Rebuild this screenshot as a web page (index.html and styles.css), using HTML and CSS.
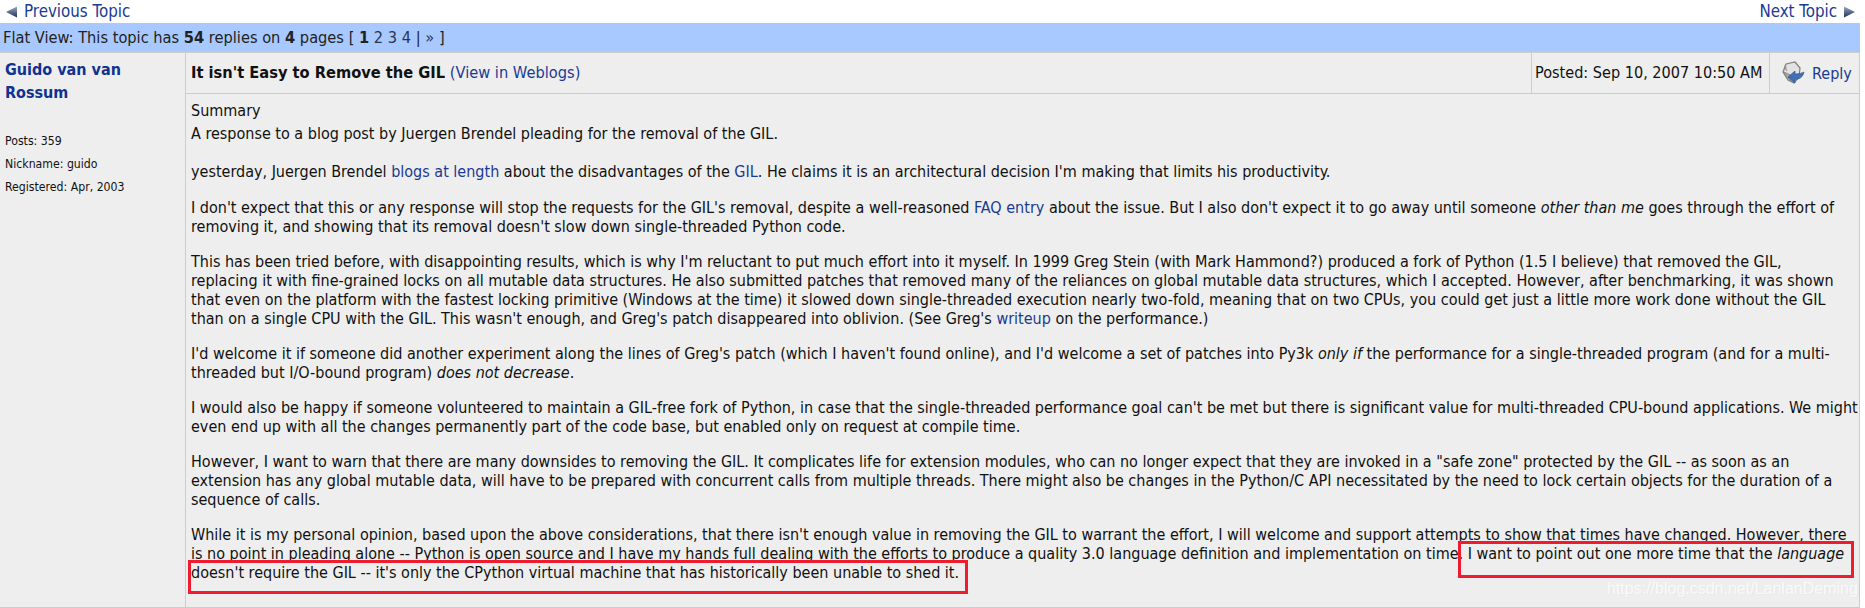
FILE: index.html
```
<!DOCTYPE html>
<html lang="en">
<head>
<meta charset="utf-8">
<title>It isn't Easy to Remove the GIL</title>
<link rel="stylesheet" href="styles.css">
</head>
<body>
<nav class="topnav">
  <a class="navlink" href="#"><svg class="arrow" width="12" height="12" viewBox="0 0 12 12"><defs><linearGradient id="ga" x1="0" y1="0" x2="0" y2="1"><stop offset="0" stop-color="#9aa9c4"/><stop offset="1" stop-color="#1f2f55"/></linearGradient></defs><path d="M12 0.5V11.5L1 6Z" fill="url(#ga)"/></svg>Previous Topic</a>
  <a class="navlink" href="#">Next Topic<svg class="arrow" width="12" height="12" viewBox="0 0 12 12"><defs><linearGradient id="gb" x1="0" y1="0" x2="0" y2="1"><stop offset="0" stop-color="#9aa9c4"/><stop offset="1" stop-color="#1f2f55"/></linearGradient></defs><path d="M0 0.5V11.5L11 6Z" fill="url(#gb)"/></svg></a>
</nav>
<div class="flatbar">Flat View: This topic has <b>54</b> replies on <b>4</b> pages [ <b>1</b> <a href="#">2</a> <a href="#">3</a> <a href="#">4</a> | <a href="#">»</a> ]</div>
<div class="post">
  <aside class="author">
    <a class="name" href="#">Guido van van<br>Rossum</a>
    <ul class="meta">
      <li>Posts: 359</li>
      <li>Nickname: guido</li>
      <li>Registered: Apr, 2003</li>
    </ul>
  </aside>
  <div class="main">
    <header class="head">
      <div class="title"><b>It isn't Easy to Remove the GIL</b> <a href="#">(View in Weblogs)</a></div>
      <div class="posted">Posted: Sep 10, 2007 10:50 AM</div>
      <div class="reply"><svg width="24" height="24" viewBox="0 0 24 24"><path d="M4 3l9-2 5 6-1 9-5 6-6-3-5-8z" fill="#e2e2e2" stroke="#7d7d7d" stroke-width="1.200"/><path d="M4 3c-2 2-1 5 1 7M2 11c1 3 3 6 6 8l4 3 1-6z" fill="#a9a9a9" stroke="#808080" stroke-width=".8"/><path d="M6 16l7-6v3c4 0 7-1 9-2-1 5-5 8-9 7v4z" fill="#3f6fb5" stroke="#2b4c86" stroke-width=".6"/></svg><a href="#">Reply</a></div>
    </header>
    <div class="body">
      <div class="label">Summary</div>
      <p class="lede">A response to a blog post by Juergen Brendel pleading for the removal of the GIL.</p>
      <p class="intro">yesterday, Juergen Brendel <a href="#">blogs at length</a> about the disadvantages of the <a href="#">GIL</a>. He claims it is an architectural decision I'm making that limits his productivity.</p>
      <p>I don't expect that this or any response will stop the requests for the GIL's removal, despite a well-reasoned <a href="#">FAQ entry</a> about the issue. But I also don't expect it to go away until someone <i>other than me</i> goes through the effort of<br>removing it, and showing that its removal doesn't slow down single-threaded Python code.</p>
      <p>This has been tried before, with disappointing results, which is why I'm reluctant to put much effort into it myself. In 1999 Greg Stein (with Mark Hammond?) produced a fork of Python (1.5 I believe) that removed the GIL,<br>replacing it with fine-grained locks on all mutable data structures. He also submitted patches that removed many of the reliances on global mutable data structures, which I accepted. However, after benchmarking, it was shown<br>that even on the platform with the fastest locking primitive (Windows at the time) it slowed down single-threaded execution nearly two-fold, meaning that on two CPUs, you could get just a little more work done without the GIL<br>than on a single CPU with the GIL. This wasn't enough, and Greg's patch disappeared into oblivion. (See Greg's <a href="#">writeup</a> on the performance.)</p>
      <p>I'd welcome it if someone did another experiment along the lines of Greg's patch (which I haven't found online), and I'd welcome a set of patches into Py3k <i>only if</i> the performance for a single-threaded program (and for a multi-<br>threaded but I/O-bound program) <i>does not decrease</i>.</p>
      <p>I would also be happy if someone volunteered to maintain a GIL-free fork of Python, in case that the single-threaded performance goal can't be met but there is significant value for multi-threaded CPU-bound applications. We might<br>even end up with all the changes permanently part of the code base, but enabled only on request at compile time.</p>
      <p>However, I want to warn that there are many downsides to removing the GIL. It complicates life for extension modules, who can no longer expect that they are invoked in a "safe zone" protected by the GIL -- as soon as an<br>extension has any global mutable data, will have to be prepared with concurrent calls from multiple threads. There might also be changes in the Python/C API necessitated by the need to lock certain objects for the duration of a<br>sequence of calls.</p>
      <p>While it is my personal opinion, based upon the above considerations, that there isn't enough value in removing the GIL to warrant the effort, I will welcome and support attempts to show that times have changed. However, there<br>is no point in pleading alone -- Python is open source and I have my hands full dealing with the efforts to produce a quality 3.0 language definition and implementation on time. I want to point out one more time that the <i>language</i><br>doesn't require the GIL -- it's only the CPython virtual machine that has historically been unable to shed it.</p>
    </div>
  </div>
</div>
<div class="mark mark-a"></div>
<div class="mark mark-b"></div>
<div class="watermark">https://blog.csdn.net/LanlanDeming</div>
</body>
</html>
```
FILE: styles.css
```
html, body { margin: 0; padding: 0; height: 608px; overflow: hidden; background: #fff; }
body { font: 16.2px/23px "DejaVu Sans Condensed", "DejaVu Sans", sans-serif; color: #111; position: relative; }
a { color: #1a3a94; text-decoration: none; }
.topnav { display: flex; justify-content: space-between; height: 23px; padding: 0 4px 0 5px; width: 1851px; font-size: 16.8px; }
.navlink { display: flex; align-items: center; gap: 7px; }
.arrow { flex: none; }
.flatbar { height: 29px; line-height: 29px; background: #a8c9ff; padding-left: 3px; border-bottom: 1px solid #ccc; width: 1857px; color: #222; font-size: 16.25px; }
.flatbar a { color: #2a3550; }
.post { display: flex; width: 1860px; height: 555px; border-bottom: 1px solid #ccc; border-right: 1px solid #ccc; background: #eee; box-sizing: border-box; }
.author { width: 186px; flex: none; border-right: 1px solid #ccc; padding: 5px 0 0 5px; box-sizing: border-box; }
.name { font-weight: bold; color: #0f3391; display: block; font-size: 16px; }
.meta { list-style: none; margin: 26px 0 0; padding: 0; font-size: 12.2px; }
.main { flex: 1; min-width: 0; }
.head { display: flex; height: 40px; border-bottom: 1px solid #ccc; align-items: stretch; }
.title { flex: 1; padding-left: 5px; line-height: 40px; font-size: 16.3px; }
.posted { width: 238px; border-left: 1px solid #ccc; padding-left: 3px; box-sizing: border-box; line-height: 40px; font-size: 16.1px; }
.reply { width: 90px; border-left: 1px solid #ccc; display: flex; align-items: center; gap: 6px; padding-left: 12px; box-sizing: border-box; font-size: 16px; }
.body { padding: 7px 0 0 5px; white-space: nowrap; font-size: 16px; line-height: 19px; }
.label { margin-bottom: 4px; }
.body p { margin: 0 0 16px; }
.body .lede { margin-bottom: 19px; }
.body .intro { margin-bottom: 17px; }
.mark { position: absolute; border: 3px solid #ee1c2e; box-sizing: border-box; }
.mark-a { left: 1458px; top: 541px; width: 396px; height: 37px; }
.mark-b { left: 188px; top: 560px; width: 780px; height: 34px; }
.watermark { position: absolute; left: 1607px; top: 579px; font: 16px/20px "Liberation Sans", sans-serif; color: rgba(255,255,255,.75); text-shadow: 1px 1px 1px rgba(0,0,0,.03); }
```
